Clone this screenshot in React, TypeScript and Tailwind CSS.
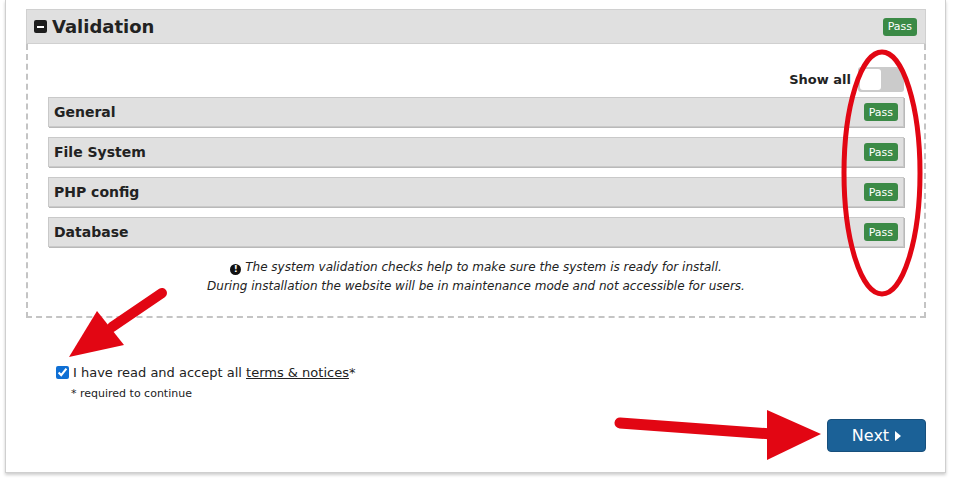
import React from "react";

const checks = ["General", "File System", "PHP config", "Database"];

function PassBadge() {
  return (
    <span className="inline-flex h-[18px] items-center rounded-[3px] bg-[#3b8a46] px-[5px] text-[11px] leading-none text-white">
      Pass
    </span>
  );
}

function Annotations() {
  return (
    <svg className="pointer-events-none absolute inset-0" width="953" height="479" viewBox="0 0 953 479">
      <ellipse cx="882" cy="173" rx="38" ry="121" fill="none" stroke="#e20613" strokeWidth="5" />
      <line x1="162" y1="293" x2="112" y2="327" stroke="#e20613" strokeWidth="10" strokeLinecap="round" />
      <polygon points="69,357 97,311 124,345" fill="#e20613" />
      <line x1="620" y1="423" x2="772" y2="434" stroke="#e20613" strokeWidth="11" strokeLinecap="round" />
      <polygon points="821,434 767,410 767,460" fill="#e20613" />
    </svg>
  );
}

export default function App() {
  return (
    <div className="relative h-[479px] w-[953px] overflow-hidden bg-white font-['DejaVu_Sans',sans-serif] text-[#222]">
      <div className="ml-[5px] mr-[7px] h-[473px] border-x border-b border-[#cfcfcf] bg-white pl-[20px] pr-[19px] pt-[9px] shadow-[0_2px_3px_rgba(0,0,0,0.2)]">
        {/* validation header */}
        <div className="flex h-[35px] items-center justify-between border border-[#d0d0d0] bg-[#e0e0e0] pl-[7px] pr-[8px]">
          <div className="flex items-center gap-[5px]">
            <span className="flex h-[13px] w-[13px] items-center justify-center rounded-[2px] bg-[#1e1e1e]">
              <span className="h-[2px] w-[7px] bg-white" />
            </span>
            <span className="text-[18px] font-bold">Validation</span>
          </div>
          <PassBadge />
        </div>

        {/* checks box */}
        <div className="h-[274px] border-x-2 border-b-2 border-dashed border-[#c4c4c4] px-[20px] pt-[23px]">
          <div className="flex items-center justify-end gap-[7px]">
            <span className="text-[13px] font-bold">Show all</span>
            <span className="flex h-[25px] w-[46px] items-center rounded-[3px] bg-[#cbcbcb] px-[2px]">
              <span className="h-[21px] w-[21px] rounded-[3px] bg-white" />
            </span>
          </div>
          <div className="mt-[5px] flex flex-col gap-[10px]">
            {checks.map((c) => (
              <div
                key={c}
                className="flex h-[30px] items-center justify-between border border-[#c9c9c9] bg-[#e0e0e0] pl-[5px] pr-[5px] shadow-[1px_1px_0_#b9b9b9]"
              >
                <span className="text-[14px] font-bold">{c}</span>
                <PassBadge />
              </div>
            ))}
          </div>
          <div className="mt-[11px] text-center text-[12px] italic leading-[19px] text-[#222]">
            <div>
              <span className="mr-[4px] inline-flex h-[11px] w-[11px] items-center justify-center rounded-full bg-[#111] align-[-1px] text-[9px] font-bold not-italic leading-none text-white">
                !
              </span>
              The system validation checks help to make sure the system is ready for install.
            </div>
            <div>During installation the website will be in maintenance mode and not accessible for users.</div>
          </div>
        </div>

        {/* terms */}
        <div className="ml-[30px] mt-[45px]">
          <label className="flex items-center gap-[4px] text-[13px]">
            <input type="checkbox" defaultChecked className="h-[13px] w-[13px] accent-[#0f6fd4]" />
            <span>
              I have read and accept all <span className="underline">terms &amp; notices</span>*
            </span>
          </label>
          <div className="ml-[15px] mt-[3px] text-[11px]">* required to continue</div>
        </div>

        <div className="mt-[17px] flex justify-end">
          <button className="flex h-[33px] w-[99px] items-center justify-center gap-[6px] rounded-[4px] border border-[#174f7c] bg-[#1b6197] text-[16px] text-white">
            Next
            <svg width="6" height="10" viewBox="0 0 6 10">
              <polygon points="0,0 6,5 0,10" fill="white" />
            </svg>
          </button>
        </div>
      </div>
      <Annotations />
    </div>
  );
}
